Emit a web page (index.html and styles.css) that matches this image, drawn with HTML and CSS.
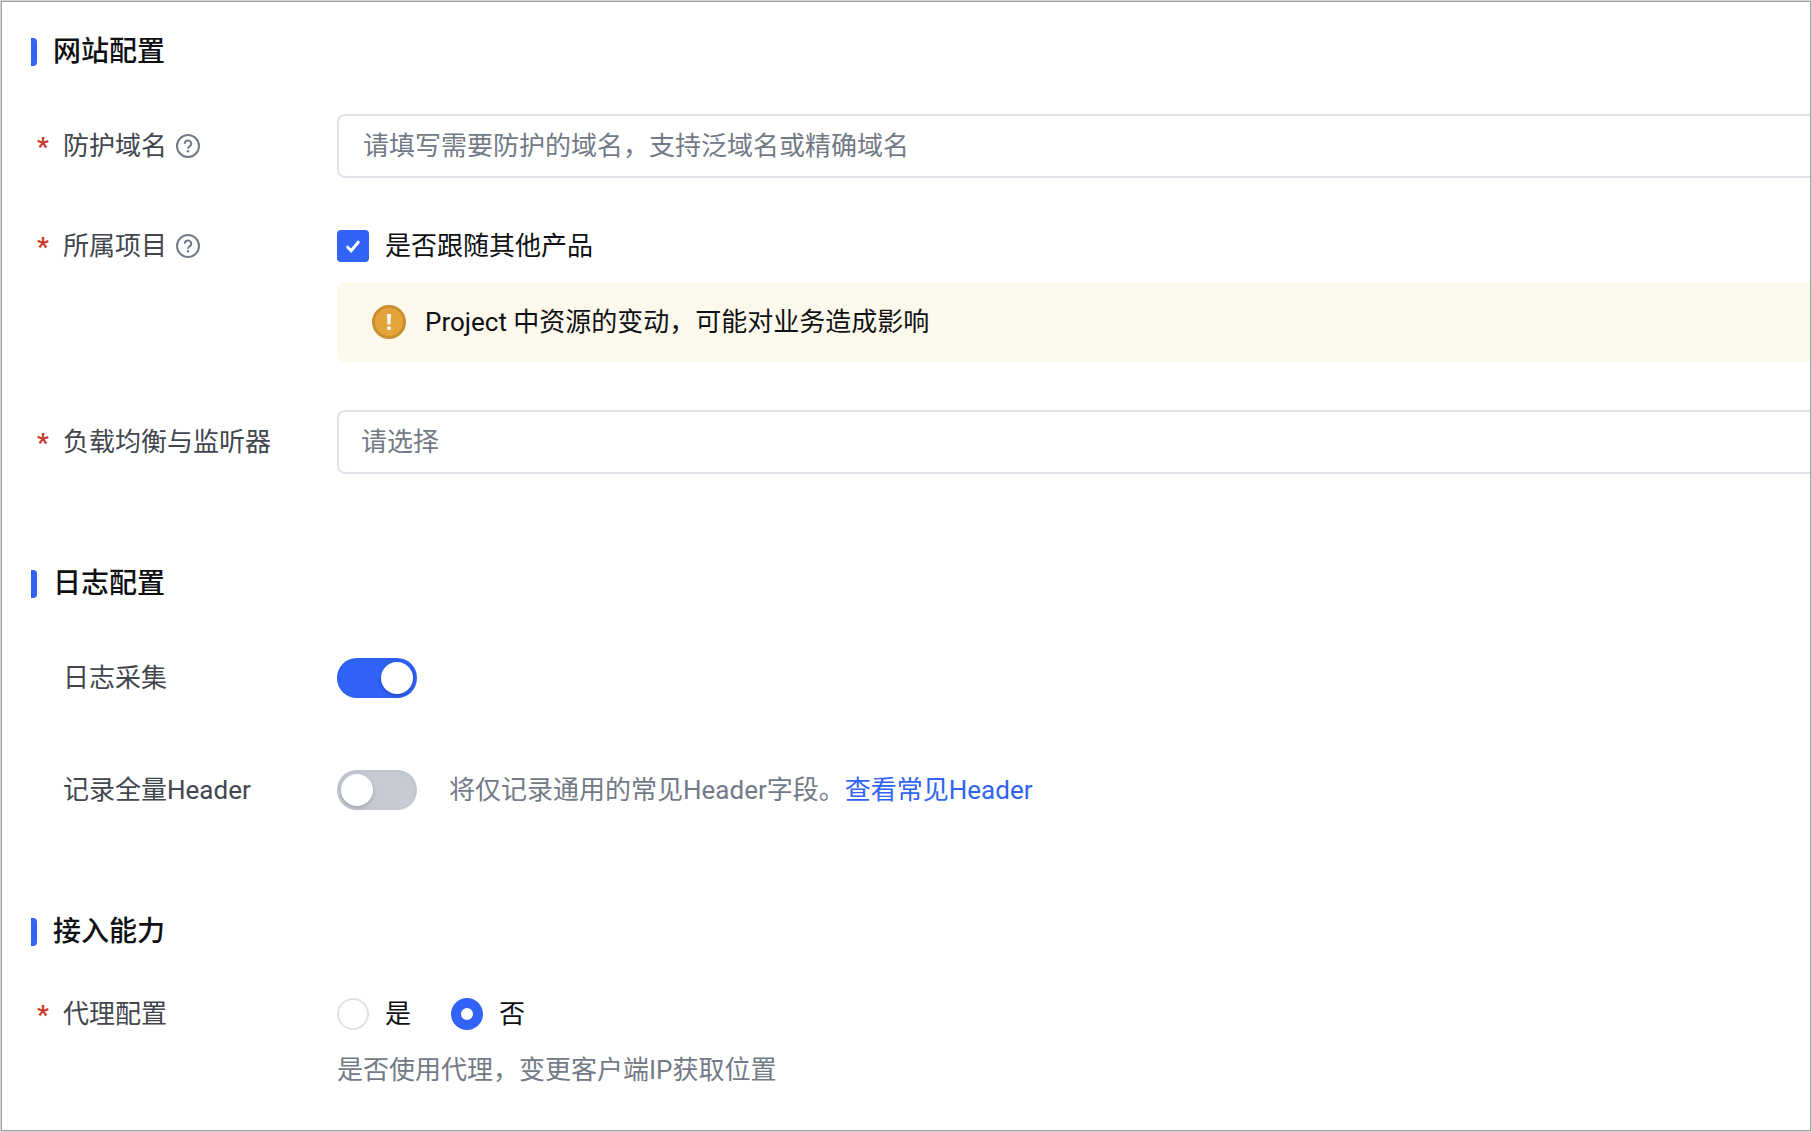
FILE: index.html
```html
<!DOCTYPE html>
<html lang="zh-CN">
<head>
  <meta charset="utf-8">
  <meta name="viewport" content="width=device-width, initial-scale=1">
  <title>网站配置</title>
  <link rel="stylesheet" href="styles.css">
</head>
<body>
  <form class="panel">
    <section class="section">
      <h2 class="section-title">网站配置</h2>
      <div class="rows">
        <div class="row">
          <div class="row-label tall">
            <span class="required">*</span>
            <label for="domain">防护域名</label>
            <svg class="help" viewBox="0 0 24 24" aria-hidden="true"><circle cx="12" cy="12" r="11"/><path d="M8.800 9.800a3.200 3.200 0 1 1 4.800 2.600c-1 .6-1.600 1.100-1.600 2.400"/><circle class="help-dot" cx="12" cy="17.300" r="1.200"/></svg>
          </div>
          <input class="field" id="domain" type="text" placeholder="请填写需要防护的域名，支持泛域名或精确域名">
        </div>
        <div class="row">
          <div class="row-label">
            <span class="required">*</span>
            <span>所属项目</span>
            <svg class="help" viewBox="0 0 24 24" aria-hidden="true"><circle cx="12" cy="12" r="11"/><path d="M8.800 9.800a3.200 3.200 0 1 1 4.800 2.600c-1 .6-1.600 1.100-1.600 2.400"/><circle class="help-dot" cx="12" cy="17.300" r="1.200"/></svg>
          </div>
          <div class="stack">
            <label class="choice">
              <span class="check">
                <input class="check-input" type="checkbox" checked>
                <svg class="check-mark" viewBox="0 0 32 32" aria-hidden="true"><path d="M10.700 17.200l3.500 3.600 7-8.600"/></svg>
              </span>
              是否跟随其他产品
            </label>
            <div class="alert">
              <svg class="alert-icon" viewBox="0 0 34 34" aria-hidden="true"><circle cx="17" cy="17" r="15.500"/><path d="M15 9h4l-.5 10.500h-3z"/><rect x="15.200" y="21.500" width="3.600" height="3.600" rx="1"/></svg>
              <span>Project 中资源的变动，可能对业务造成影响</span>
            </div>
          </div>
        </div>
        <div class="row">
          <div class="row-label tall">
            <span class="required">*</span>
            <label for="listener">负载均衡与监听器</label>
          </div>
          <select class="field" id="listener"><option>请选择</option></select>
        </div>
      </div>
    </section>

    <section class="section">
      <h2 class="section-title">日志配置</h2>
      <div class="rows">
        <div class="row">
          <div class="row-label tall">
            <span class="required"></span>
            <label for="collect">日志采集</label>
          </div>
          <div class="inline">
            <input class="switch" id="collect" type="checkbox" role="switch" checked>
          </div>
        </div>
        <div class="row">
          <div class="row-label tall">
            <span class="required"></span>
            <label for="headers">记录全量Header</label>
          </div>
          <div class="inline">
            <input class="switch" id="headers" type="checkbox" role="switch">
            <span class="hint">将仅记录通用的常见Header字段。<a class="link" href="#">查看常见Header</a></span>
          </div>
        </div>
      </div>
    </section>

    <section class="section">
      <h2 class="section-title">接入能力</h2>
      <div class="rows">
        <div class="row">
          <div class="row-label">
            <span class="required">*</span>
            <span>代理配置</span>
          </div>
          <div class="stack">
            <div class="radios">
              <label class="choice"><input class="radio" type="radio" name="proxy">是</label>
              <label class="choice"><input class="radio" type="radio" name="proxy" checked>否</label>
            </div>
            <span class="hint">是否使用代理，变更客户端IP获取位置</span>
          </div>
        </div>
      </div>
    </section>
  </form>
</body>
</html>
```

FILE: styles.css
```css
* {
  box-sizing: border-box;
}

body {
  margin: 0;
  border: 1px solid #d6d6d6;
  background: #fff;
  color: #0e1013;
  font: 26px/40px Roboto, "Noto Sans CJK SC", sans-serif;
}

.panel {
  display: flex;
  flex-direction: column;
  gap: 90px;
  min-height: calc(100vh - 2px);
  padding: 30px 0 30px 29px;
  border: 1px solid #a0a0a0;
}

.section {
  display: flex;
  flex-direction: column;
  gap: 42px;
}

.section-title {
  display: flex;
  align-items: center;
  gap: 16px;
  margin: 0;
  font-size: 28px;
  font-weight: 500;
}

.section-title::before {
  content: "";
  width: 6px;
  height: 28px;
  border-radius: 0 4px 4px 0;
  background: #3063f6;
}

.rows {
  display: flex;
  flex-direction: column;
  gap: 48px;
}

.row {
  display: grid;
  grid-template-columns: 306px minmax(0, 1fr);
}

.row-label {
  display: flex;
  align-items: center;
  height: 40px;
  padding-left: 6px;
  color: #42464e;
}

.row-label.tall {
  height: 64px;
}

.required {
  flex: none;
  width: 26px;
  padding-top: 2px;
  color: #cb3a2a;
  font-weight: 700;
}

.help {
  width: 24px;
  height: 24px;
  margin-left: 9px;
  fill: none;
  stroke: #737a87;
  stroke-width: 2;
}

.help-dot {
  fill: #737a87;
  stroke: none;
}

.field {
  width: 100%;
  height: 64px;
  padding: 0 24px;
  border: 2px solid #dde1e8;
  border-right: 0;
  border-radius: 8px 0 0 8px;
  outline: 0;
  background: #fff;
  color: #737a87;
  font: inherit;
  appearance: none;
}

select.field {
  padding: 0 22px;
}

.field::placeholder {
  color: #737a87;
  opacity: 1;
}

.stack {
  display: flex;
  flex-direction: column;
  gap: 16px;
}

.choice {
  display: flex;
  align-items: center;
  gap: 16px;
}

.check {
  display: grid;
}

.check-input,
.check-mark {
  grid-area: 1 / 1;
  width: 32px;
  height: 32px;
  margin: 0;
}

.check-input {
  border-radius: 4px;
  background: #3063f6;
  appearance: none;
}

.check-mark {
  z-index: 1;
  fill: none;
  stroke: #fff;
  stroke-width: 3;
  stroke-linecap: round;
  pointer-events: none;
}

.alert {
  display: flex;
  align-items: center;
  gap: 19px;
  height: 80px;
  padding-left: 35px;
  border-radius: 8px 0 0 8px;
  background: #fcf8eb;
}

.alert-icon {
  width: 34px;
  height: 34px;
  fill: #fff;
}

.alert-icon circle {
  fill: #e5a43b;
  stroke: #c78f30;
  stroke-width: 3;
}

.inline {
  display: flex;
  align-items: center;
  gap: 32px;
}

.switch {
  display: flex;
  width: 80px;
  height: 40px;
  margin: 0;
  padding: 4px;
  border-radius: 20px;
  background: #c7cbd4;
  box-shadow: inset 0 1px 4px rgb(0 0 0 / 8%);
  appearance: none;
}

.switch::before {
  content: "";
  width: 32px;
  height: 32px;
  border-radius: 50%;
  background: #fff;
  box-shadow: 0 2px 4px rgb(0 0 0 / 20%);
}

.switch:checked {
  justify-content: flex-end;
  background: #3063f6;
}

.hint {
  color: #737a87;
}

.link {
  color: #3063f6;
  text-decoration: none;
}

.radios {
  display: flex;
  gap: 40px;
}

.radio {
  width: 32px;
  height: 32px;
  margin: 0;
  border: 2px solid #dde1e8;
  border-radius: 50%;
  background: #fff;
  appearance: none;
}

.radio:checked {
  border: 10px solid #3063f6;
}
```
